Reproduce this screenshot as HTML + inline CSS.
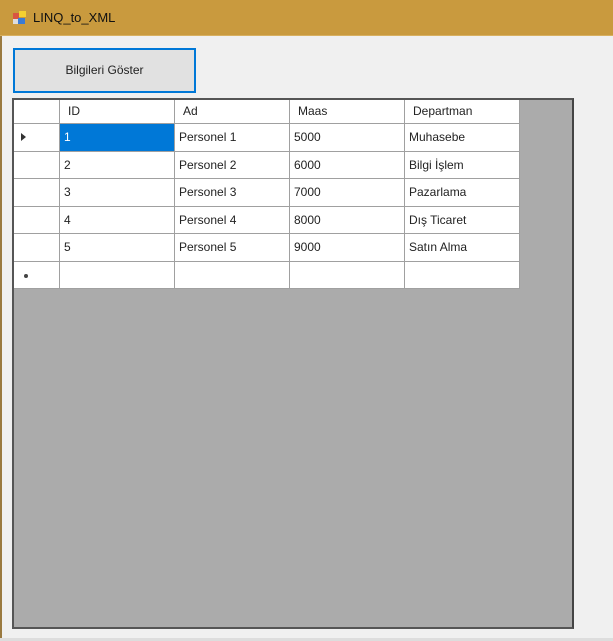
<!DOCTYPE html>
<html><head><style>
*{margin:0;padding:0;box-sizing:border-box}
body{width:613px;height:641px;background:#f0f0f0;position:relative;overflow:hidden;font-family:"Liberation Sans",sans-serif;font-size:12px;color:#000}
.title{position:absolute;left:0;top:0;width:613px;height:36px;background:#c99a3e;border-bottom:1px solid #d8b060}
.title span{position:absolute;left:33px;top:10px;font-size:13px;color:#111}
.lb{position:absolute;left:0;top:36px;width:2px;height:605px;background:#9a7a40}
.btn{position:absolute;left:13px;top:48px;width:183px;height:45px;background:#e1e1e1;border:2px solid #0078d7;text-align:center;line-height:41px;font-size:12px;color:#222}
.grid{position:absolute;left:12px;top:98px;width:562px;height:531px;background:#ababab;border:2px solid #555;border-right-color:#444}
.c{position:absolute;background:#fff;border-right:1px solid #a0a0a0;border-bottom:1px solid #a0a0a0;padding-left:4px;line-height:27px;color:#222;white-space:nowrap}
.h{line-height:22px;padding-left:8px}
.sel{background:#0078d7;color:#fff}
.bot{position:absolute;left:0;top:638px;width:613px;height:3px;background:#ddd}
</style></head><body>
<div class="title">
<svg style="position:absolute;left:12px;top:10px" width="15" height="15" viewBox="0 0 15 15">
<rect x="1" y="3" width="6" height="7" fill="#d44" opacity=".8"/><rect x="7" y="1" width="7" height="6" fill="#f5d030"/><rect x="6" y="8" width="7" height="6" fill="#3a7bd5"/><rect x="1" y="9" width="5" height="5" fill="#ddd"/></svg>
<span>LINQ_to_XML</span></div>
<div class="lb"></div>
<div class="btn">Bilgileri Göster</div>
<div class="grid">
<div class="c h" style="left:0;top:0;width:46px;height:24px"></div>
<div class="c h" style="left:46px;top:0;width:115px;height:24px">ID</div>
<div class="c h" style="left:161px;top:0;width:115px;height:24px">Ad</div>
<div class="c h" style="left:276px;top:0;width:115px;height:24px">Maas</div>
<div class="c h" style="left:391px;top:0;width:115px;height:24px">Departman</div>

<div class="c" style="left:0;top:24px;width:46px;height:28px"><span style="position:absolute;left:7px;top:9px;width:0;height:0;border-left:5px solid #333;border-top:4px solid transparent;border-bottom:4px solid transparent"></span></div>
<div class="c sel" style="left:46px;top:24px;width:115px;height:28px">1</div>
<div class="c" style="left:161px;top:24px;width:115px;height:28px">Personel 1</div>
<div class="c" style="left:276px;top:24px;width:115px;height:28px">5000</div>
<div class="c" style="left:391px;top:24px;width:115px;height:28px">Muhasebe</div>

<div class="c" style="left:0;top:52px;width:46px;height:27px"></div>
<div class="c" style="left:46px;top:52px;width:115px;height:27px">2</div>
<div class="c" style="left:161px;top:52px;width:115px;height:27px">Personel 2</div>
<div class="c" style="left:276px;top:52px;width:115px;height:27px">6000</div>
<div class="c" style="left:391px;top:52px;width:115px;height:27px">Bilgi İşlem</div>

<div class="c" style="left:0;top:79px;width:46px;height:28px"></div>
<div class="c" style="left:46px;top:79px;width:115px;height:28px">3</div>
<div class="c" style="left:161px;top:79px;width:115px;height:28px">Personel 3</div>
<div class="c" style="left:276px;top:79px;width:115px;height:28px">7000</div>
<div class="c" style="left:391px;top:79px;width:115px;height:28px">Pazarlama</div>

<div class="c" style="left:0;top:107px;width:46px;height:27px"></div>
<div class="c" style="left:46px;top:107px;width:115px;height:27px">4</div>
<div class="c" style="left:161px;top:107px;width:115px;height:27px">Personel 4</div>
<div class="c" style="left:276px;top:107px;width:115px;height:27px">8000</div>
<div class="c" style="left:391px;top:107px;width:115px;height:27px">Dış Ticaret</div>

<div class="c" style="left:0;top:134px;width:46px;height:28px"></div>
<div class="c" style="left:46px;top:134px;width:115px;height:28px">5</div>
<div class="c" style="left:161px;top:134px;width:115px;height:28px">Personel 5</div>
<div class="c" style="left:276px;top:134px;width:115px;height:28px">9000</div>
<div class="c" style="left:391px;top:134px;width:115px;height:28px">Satın Alma</div>

<div class="c" style="left:0;top:162px;width:46px;height:27px"><span style="position:absolute;left:10px;top:12px;width:4px;height:4px;border-radius:2px;background:#444"></span></div>
<div class="c" style="left:46px;top:162px;width:115px;height:27px"></div>
<div class="c" style="left:161px;top:162px;width:115px;height:27px"></div>
<div class="c" style="left:276px;top:162px;width:115px;height:27px"></div>
<div class="c" style="left:391px;top:162px;width:115px;height:27px"></div>
</div>
<div class="bot"></div>
</body></html>
